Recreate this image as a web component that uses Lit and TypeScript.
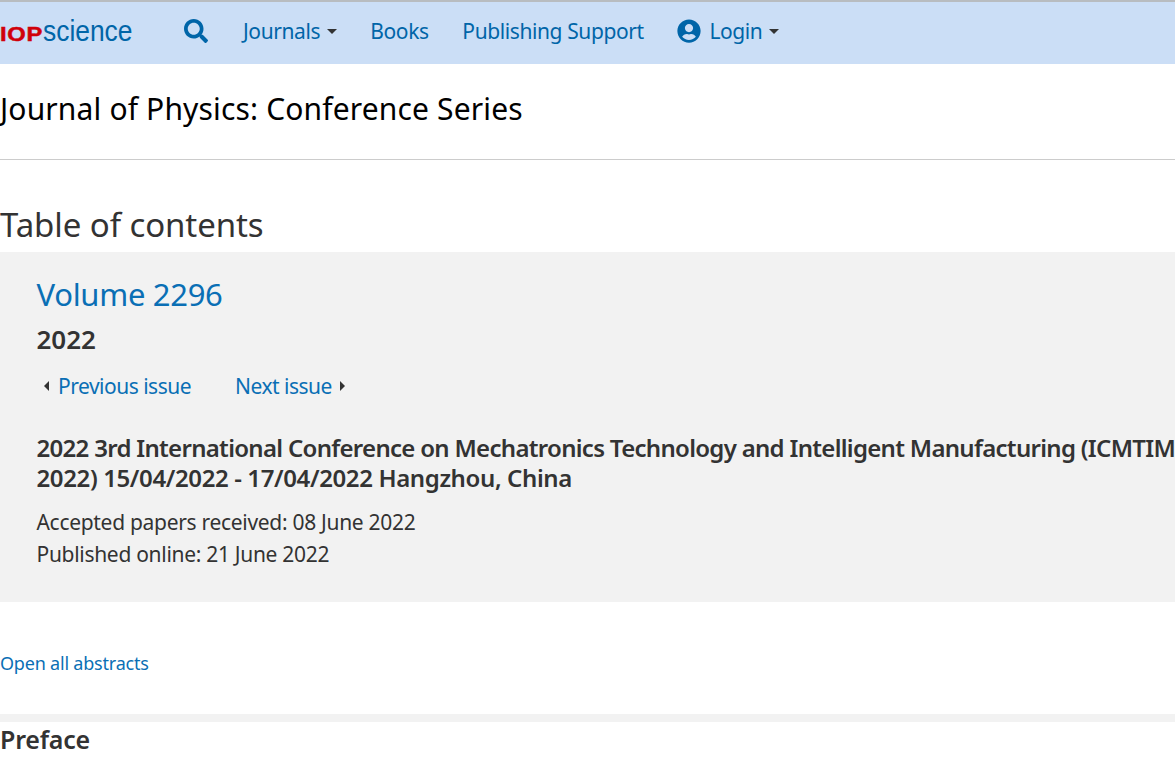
import { LitElement, html, css } from "lit";
import { customElement } from "lit/decorators.js";

@customElement("app-root")
export class AppRoot extends LitElement {
  static styles = css`
    :host { display: block; height: 783px; overflow: hidden; background: #fff; font-family: "Noto Sans", "Open Sans", sans-serif; color: #333; }
    a { color: #0065a8; text-decoration: none; }
    .nav { height: 58px; padding-bottom: 4px; border-top: 2px solid #b8bcc0; background: #cbdef6; display: flex; align-items: center; font-size: 21px; letter-spacing: -0.4px; white-space: nowrap; }
    .logo { display: flex; align-items: baseline; width: 184px; overflow: hidden; }
    .iop { display: inline-block; transform: scaleX(1.13); transform-origin: left center; color: #d0000a; font: 900 21px "Liberation Sans", sans-serif; letter-spacing: 0.6px; -webkit-text-stroke: 0.5px #d0000a; }
    .sci { display: inline-block; transform: scaleX(0.91); transform-origin: left center; color: #0065a8; font: 400 29px "Liberation Sans", sans-serif; letter-spacing: 0; margin-left: 5px; }
    .search { width: 24px; height: 24px; margin-right: 35px; flex: none; }
    .item { display: flex; align-items: center; margin-right: 33.7px; }
    .caret { width: 0; height: 0; border: 5px solid transparent; border-top-color: #333; border-bottom: 0; margin-left: 6.5px; }
    .user { width: 24px; height: 24px; margin-right: 8px; flex: none; }
    .title { height: 95px; border-bottom: 1px solid #ccc; font-size: 30px; line-height: 89px; color: #000; letter-spacing: 0.15px; white-space: nowrap; }
    h2 { margin: 43px 0 0; height: 49px; font-weight: 400; font-size: 33px; line-height: 44px; letter-spacing: -0.08px; }
    .panel { background: #f2f2f2; height: 350px; padding: 0 0 0 36.5px; overflow: hidden; white-space: nowrap; }
    .vol { font-size: 31px; line-height: 42px; margin-top: 21px; letter-spacing: -0.3px; }
    .vol a { color: #0a6fb5; }
    .year { font-size: 26px; line-height: 36px; font-weight: 600; margin-top: 6px; }
    .pager { display: flex; align-items: center; font-size: 21px; line-height: 30px; margin-top: 14px; letter-spacing: -0.5px; }
    .pager a { color: #0a6fb5; }
    .tri-l { width: 0; height: 0; border: 5px solid transparent; border-right-color: #333; border-left: 0; margin: 0 9.5px 0 7px; }
    .tri-r { width: 0; height: 0; border: 5px solid transparent; border-left-color: #333; border-right: 0; margin-left: 8px; }
    .next { margin-left: 44px; }
    .conf { font-size: 24px; line-height: 30px; font-weight: 600; margin-top: 32px; }
    .l1 { letter-spacing: -0.7px; }
    .l2 { letter-spacing: -0.38px; }
    .dates { font-size: 21px; line-height: 32px; margin-top: 13px; letter-spacing: -0.3px; }
    .open { margin-top: 47px; font-size: 18px; line-height: 28px; letter-spacing: -0.2px; }
    .open a { color: #0a6fb5; }
    .bar { height: 8px; background: #f2f2f2; margin-top: 37px; }
    .pref { font-size: 25px; line-height: 34px; font-weight: 600; letter-spacing: -0.2px; }
  `;

  render() {
    return html`
      <nav class="nav">
        <div class="logo"><span class="iop">IOP</span><span class="sci">science</span></div>
        <svg class="search" viewBox="0 0 512 512"><path fill="#0065a8" d="M505 442.700 405.300 343c-4.500-4.500-10.600-7-17-7H372c27.600-35.300 44-79.700 44-128C416 93.100 322.900 0 208 0S0 93.100 0 208s93.100 208 208 208c48.300 0 92.700-16.400 128-44v16.300c0 6.400 2.500 12.500 7 17l99.700 99.700c9.400 9.400 24.600 9.400 33.900 0l28.300-28.300c9.400-9.400 9.400-24.600.1-34zM208 336c-70.700 0-128-57.200-128-128 0-70.700 57.200-128 128-128 70.700 0 128 57.200 128 128 0 70.700-57.200 128-128 128z"/></svg>
        <a class="item" href="#">Journals<span class="caret"></span></a>
        <a class="item" href="#">Books</a>
        <a class="item" href="#">Publishing Support</a>
        <a class="item" href="#"><svg class="user" viewBox="0 0 496 512"><path fill="#0065a8" d="M248 8C111 8 0 119 0 256s111 248 248 248 248-111 248-248S385 8 248 8zm0 96c48.600 0 88 39.400 88 88s-39.400 88-88 88-88-39.400-88-88 39.400-88 88-88zm0 344c-58.700 0-111.300-26.600-146.500-68.200 18.800-35.400 55.600-59.800 98.500-59.800 2.400 0 4.800.4 7.100 1.100 13 4.200 26.600 6.900 40.900 6.900 14.300 0 28-2.700 40.900-6.900 2.300-.7 4.700-1.100 7.100-1.100 42.900 0 79.700 24.400 98.500 59.800C359.300 421.400 306.700 448 248 448z"/></svg>Login<span class="caret"></span></a>
      </nav>
      <div class="title">Journal of Physics: Conference Series</div>
      <h2>Table of contents</h2>
      <section class="panel">
        <div class="vol"><a href="#">Volume 2296</a></div>
        <div class="year">2022</div>
        <div class="pager">
          <span class="tri-l"></span><a href="#">Previous issue</a>
          <a class="next" href="#">Next issue</a><span class="tri-r"></span>
        </div>
        <div class="conf"><span class="l1">2022 3rd International Conference on Mechatronics Technology and Intelligent Manufacturing (ICMTIM</span><br /><span class="l2">2022) 15/04/2022 - 17/04/2022 Hangzhou, China</span></div>
        <div class="dates">Accepted papers received: 08 June 2022<br />Published online: 21 June 2022</div>
      </section>
      <div class="open"><a href="#">Open all abstracts</a></div>
      <div class="bar"></div>
      <div class="pref">Preface</div>
    `;
  }
}
